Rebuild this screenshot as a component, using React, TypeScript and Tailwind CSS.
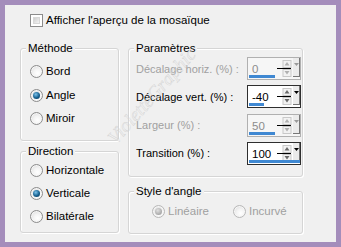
import React from "react";

const font = { fontFamily: '"Liberation Sans", Arial, sans-serif' };

function Radio({ checked = false, disabled = false }: { checked?: boolean; disabled?: boolean }) {
  return (
    <span
      className={`flex items-center justify-center w-[13px] h-[13px] shrink-0 rounded-full border ${
        disabled ? "border-[#b8b8b8]" : "border-[#8c8c8c]"
      } bg-[radial-gradient(circle_at_60%_65%,#ffffff_0%,#f4f4f4_40%,#d4d4d4_100%)] shadow-[inset_0_0_0_1px_#f6f6f6]`}
    >
      {checked && (
        <span
          className={`w-[7px] h-[7px] rounded-full ${
            disabled
              ? "bg-[radial-gradient(circle_at_40%_35%,#e0e0e0,#a8a8a8_70%,#909090)]"
              : "bg-[radial-gradient(circle_at_40%_35%,#7cc2ea,#16608f_55%,#08304f)]"
          }`}
        />
      )}
    </span>
  );
}

function RadioRow({
  label,
  checked,
  disabled,
}: {
  label: string;
  checked?: boolean;
  disabled?: boolean;
}) {
  return (
    <div className="flex items-center h-[13px] gap-[3px]">
      <Radio checked={checked} disabled={disabled} />
      <span className={`whitespace-nowrap text-[11.5px] leading-[13px] ${disabled ? "text-[#a0a0a0]" : "text-black"}`}>
        {label}
      </span>
    </div>
  );
}

function Group({
  title,
  className,
  children,
}: {
  title: string;
  className: string;
  children: React.ReactNode;
}) {
  return (
    <div
      className={`relative rounded-[3px] border border-[#d5d5d5] shadow-[inset_1px_1px_0_#ffffff,1px_1px_0_#ffffff] ${className}`}
    >
      <span className="absolute -top-[8px] left-[5px] px-[2px] bg-[#f0f0f0] whitespace-nowrap text-[11.5px] leading-[14px] text-black">
        {title}
      </span>
      {children}
    </div>
  );
}

function Spin({ value, frac, enabled }: { value: string; frac: number; enabled: boolean }) {
  return (
    <div
      className={`relative flex shrink-0 w-[54px] h-[23px] border ${
        enabled ? "border-[#2e2e2e] bg-white" : "border-[#b0b0b0] bg-[#f6f6f6]"
      }`}
    >
      <div
        className={`w-[34px] pl-[4px] pt-[4px] text-[11.5px] leading-[14px] ${enabled ? "text-black" : "text-[#8c8c8c]"}`}
      >
        {value}
      </div>
      <div className="relative w-[10px] flex flex-col items-center pt-[2px]">
        <svg width="10" height="17" viewBox="0 0 10 17">
          <rect x="1" y="0.5" width="8" height="7" fill="#f2f2f2" stroke="#c8c8c8" />
          <rect x="1" y="9.5" width="8" height="7" fill="#f2f2f2" stroke="#c8c8c8" />
          <polygon points="5,2 7.5,5.5 2.5,5.5" fill={enabled ? "#6a6a6a" : "#b0b0b0"} />
          <polygon points="5,14.5 7.5,11 2.5,11" fill={enabled ? "#6a6a6a" : "#b0b0b0"} />
        </svg>
        <span className="absolute left-[-5px] top-[10px] w-[14px] h-[1px] bg-black" />
      </div>
      <div className="ml-[1px] w-[7px] h-[19px] border-r border-b border-[#777] bg-[#ebebeb] flex justify-center pt-[5px]">
        <svg width="5" height="3" viewBox="0 0 5 3">
          <polygon points="0,0 5,0 2.5,3" fill={enabled ? "#000" : "#9a9a9a"} />
        </svg>
      </div>
      <span
        className="absolute bottom-[1px] left-[1px] h-[3px] bg-[#3f88d2]"
        style={{ width: `${Math.round(frac * 51)}px` }}
      />
    </div>
  );
}

function ParamRow({ label, value, frac, enabled }: { label: string; value: string; frac: number; enabled: boolean }) {
  return (
    <div className="flex items-center justify-between h-[23px] pr-[1px]">
      <span className={`whitespace-nowrap text-[11px] leading-[14px] ${enabled ? "text-black" : "text-[#a0a0a0]"}`}>
        {label}
      </span>
      <Spin value={value} frac={frac} enabled={enabled} />
    </div>
  );
}

export default function App() {
  return (
    <div className="w-[341px] h-[247px] bg-[#a48dbb] p-[5px]" style={font}>
      <div className="relative h-full bg-[#f0f0f0] pl-[15px] pt-[9px] overflow-hidden">
        <label className="flex items-center gap-[3px] pl-[10px] h-[13px]">
          <span className="w-[13px] h-[13px] border border-[#8c8c8c] bg-white p-[2px]">
            <span className="block w-full h-full bg-[linear-gradient(135deg,#cfcfcf,#f4f4f4)] border border-[#d8d8d8]" />
          </span>
          <span className="whitespace-nowrap text-[11.5px] leading-[13px] text-black">
            Afficher l'aperçu de la mosaïque
          </span>
        </label>
        <div className="flex gap-[9px] mt-[21px]">
          <div className="flex flex-col w-[99px]">
            <Group title="Méthode" className="h-[93px] pl-[9px] pt-[16px]">
              <div className="flex flex-col gap-[10.5px]">
                <RadioRow label="Bord" />
                <RadioRow label="Angle" checked />
                <RadioRow label="Miroir" />
              </div>
            </Group>
            <Group title="Direction" className="mt-[10px] h-[82px] pl-[9px] pt-[12px]">
              <div className="flex flex-col gap-[10px]">
                <RadioRow label="Horizontale" />
                <RadioRow label="Verticale" checked />
                <RadioRow label="Bilatérale" />
              </div>
            </Group>
          </div>
          <div className="flex flex-col w-[175px]">
            <Group title="Paramètres" className="h-[129px] pl-[7px] pt-[8px]">
              <div className="flex flex-col gap-[5.3px]">
                <ParamRow label="Décalage horiz. (%) :" value="0" frac={0.5} enabled={false} />
                <ParamRow label="Décalage vert. (%) :" value="-40" frac={0.3} enabled />
                <ParamRow label="Largeur (%) :" value="50" frac={0.5} enabled={false} />
                <ParamRow label="Transition (%) :" value="100" frac={1} enabled />
              </div>
            </Group>
            <Group title="Style d'angle" className="mt-[14px] h-[43px] pl-[23px] pt-[13px]">
              <div className="flex items-center">
                <div className="w-[81px]">
                  <RadioRow label="Linéaire" checked disabled />
                </div>
                <RadioRow label="Incurvé" disabled />
              </div>
            </Group>
          </div>
        </div>
        <span
          className="pointer-events-none absolute left-[52px] top-[80px] w-[190px] text-center text-[19px] leading-[22px] italic text-transparent [-webkit-text-stroke:0.4px_#d2d2d2] rotate-[-48deg]"
          style={{ fontFamily: '"Liberation Serif", serif' }}
        >
          VioletteGraphic
        </span>
      </div>
    </div>
  );
}
